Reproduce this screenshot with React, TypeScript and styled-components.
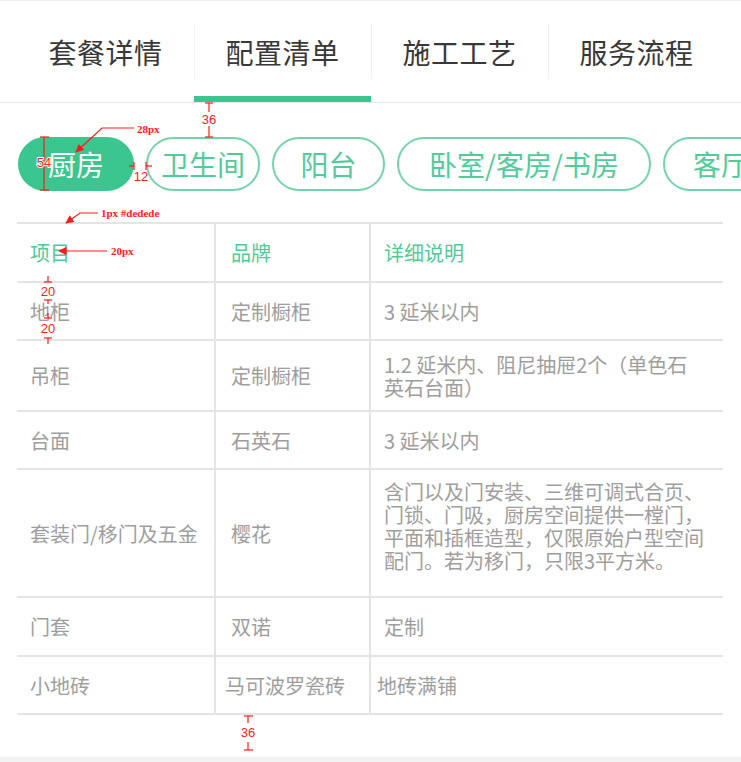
import React from 'react'
import styled, { createGlobalStyle } from 'styled-components'

const green = '#3cc68f'
const rule = '#e4e4e4'
const grey = '#9e9e9e'
const red = '#ff1a1a'

const GlobalStyle = createGlobalStyle`
    html, body {
        margin: 0;
        padding: 0;
        background: #fff;
    }
    body {
        font-family: 'Noto Sans CJK SC', 'Noto Sans', sans-serif;
    }
`

const tabs = ['套餐详情', '配置清单', '施工工艺', '服务流程']

const rooms = [
    { label: '厨房', width: 116 },
    { label: '卫生间', width: 114 },
    { label: '阳台', width: 113 },
    { label: '卧室/客房/书房', width: 254 },
    { label: '客厅', width: 116 },
]

type Item = {
    name: string
    brand: string
    detail: string
    height: number
    lift?: boolean
}

const items: Item[] = [
    { name: '地柜', brand: '定制橱柜', detail: '3 延米以内', height: 58 },
    { name: '吊柜', brand: '定制橱柜', detail: '1.2 延米内、阻尼抽屉2个（单色石英石台面）', height: 71 },
    { name: '台面', brand: '石英石', detail: '3 延米以内', height: 58 },
    {
        name: '套装门/移门及五金',
        brand: '樱花',
        detail: '含门以及门安装、三维可调式合页、门锁、门吸，厨房空间提供一樘门，平面和插框造型，仅限原始户型空间配门。若为移门，只限3平方米。',
        height: 128,
        lift: true,
    },
    { name: '门套', brand: '双诺', detail: '定制', height: 59 },
    { name: '小地砖', brand: '马可波罗瓷砖', detail: '地砖满铺', height: 58 },
]

const Annotations = () => (
    <Overlay width={741} height={762} viewBox="0 0 741 762">
        <defs>
            <marker id="tip" viewBox="0 0 10 10" refX="9" refY="5" markerWidth="7" markerHeight="7" orient="auto">
                <path d="M0,0 L10,5 L0,10 z" fill={red} />
            </marker>
        </defs>
        <g stroke={red} strokeWidth={1.2} fill="none">
            {/* tabs to pills: 36 */}
            <line x1={209} y1={103} x2={209} y2={112} />
            <line x1={209} y1={126} x2={209} y2={137} />
            <line x1={205} y1={103} x2={213} y2={103} />
            <line x1={205} y1={137} x2={213} y2={137} />
            {/* 28px */}
            <polyline points="134,128 102,128 76,152" markerEnd="url(#tip)" />
            {/* pill height 54 */}
            <line x1={44} y1={137} x2={44} y2={190} />
            <line x1={40} y1={137} x2={49} y2={137} />
            <line x1={40} y1={190} x2={49} y2={190} />
            {/* pill gap 12 */}
            <line x1={129} y1={166} x2={134} y2={166} />
            <line x1={134} y1={162} x2={134} y2={170} />
            <line x1={146} y1={166} x2={152} y2={166} />
            <line x1={146} y1={162} x2={146} y2={170} />
            {/* 1px #dedede */}
            <polyline points="98,213 80,213 66,223" markerEnd="url(#tip)" />
            {/* 20px */}
            <line x1={107} y1={251} x2={59} y2={251} markerEnd="url(#tip)" />
            {/* row padding 20 / 20 */}
            <line x1={48} y1={276} x2={48} y2={282} />
            <line x1={44} y1={282} x2={52} y2={282} />
            <line x1={44} y1={300} x2={52} y2={300} />
            <line x1={48} y1={300} x2={48} y2={304} />
            <line x1={48} y1={313} x2={48} y2={318} />
            <line x1={44} y1={318} x2={52} y2={318} />
            <line x1={44} y1={338} x2={52} y2={338} />
            <line x1={48} y1={338} x2={48} y2={344} />
            {/* bottom 36 */}
            <line x1={244} y1={716} x2={253} y2={716} />
            <line x1={248} y1={716} x2={248} y2={723} />
            <line x1={248} y1={742} x2={248} y2={750} />
            <line x1={244} y1={750} x2={253} y2={750} />
        </g>
        <Measure x={209} y={124}>36</Measure>
        <Measure x={44} y={167} stroke="#fff" strokeWidth={2} paintOrder="stroke">54</Measure>
        <Measure x={141} y={181}>12</Measure>
        <Measure x={48} y={296}>20</Measure>
        <Measure x={48} y={333}>20</Measure>
        <Measure x={248} y={737}>36</Measure>
        <Note x={137} y={133}>28px</Note>
        <Note x={101} y={217}>1px #dedede</Note>
        <Note x={111} y={255}>20px</Note>
    </Overlay>
)

export default function App() {
    return (
        <Page>
            <GlobalStyle />
            <TabBar>
                {tabs.map((t, i) => (
                    <Tab key={t} active={i === 1} divided={i > 0}>
                        {t}
                    </Tab>
                ))}
            </TabBar>

            <PillRow>
                {rooms.map((r, i) => (
                    <Pill key={r.label} active={i === 0} w={r.width}>
                        {r.label}
                    </Pill>
                ))}
            </PillRow>

            <Table>
                <Row h={59}>
                    <Cell col={0} head>项目</Cell>
                    <Cell col={1} head>品牌</Cell>
                    <Cell col={2} head>详细说明</Cell>
                </Row>
                {items.map((it, i) => {
                    const tight = i === items.length - 1
                    return (
                        <Row key={it.name} h={it.height}>
                            <Cell col={0}>{it.name}</Cell>
                            <Cell col={1} tight={tight}>{it.brand}</Cell>
                            <Cell col={2} tight={tight} lift={it.lift}>{it.detail}</Cell>
                        </Row>
                    )
                })}
            </Table>

            <Footer />
            <Annotations />
        </Page>
    )
}

const Page = styled.div`
    position: relative;
    width: 741px;
    overflow: hidden;
    background: #fff;
`

const TabBar = styled.nav`
    display: flex;
    padding: 0 17px;
    border-top: 1px solid #f0f0f0;
    border-bottom: 1px solid #e8e8e8;
`

const Tab = styled.div<{ active: boolean; divided: boolean }>`
    position: relative;
    flex: 0 0 177px;
    height: 101px;
    display: flex;
    align-items: center;
    justify-content: center;
    font-size: 28px;
    color: #383838;
    letter-spacing: 0.5px;

    &::before {
        content: '';
        display: ${p => (p.divided ? 'block' : 'none')};
        position: absolute;
        left: 0;
        top: 23px;
        height: 55px;
        width: 1px;
        background: #f1f1f1;
    }

    &::after {
        content: '';
        display: ${p => (p.active ? 'block' : 'none')};
        position: absolute;
        left: 0;
        right: 0;
        bottom: 0;
        height: 6px;
        background: ${green};
    }
`

const PillRow = styled.div`
    display: flex;
    gap: 12px;
    padding: 34px 0 0 18px;
    white-space: nowrap;
`

const Pill = styled.div<{ active: boolean; w: number }>`
    flex: none;
    box-sizing: border-box;
    width: ${p => p.w}px;
    height: 54px;
    border-radius: 27px;
    border: 2px solid ${p => (p.active ? green : '#72d4ab')};
    background: ${p => (p.active ? green : '#fff')};
    color: ${p => (p.active ? '#fff' : '#52cb9a')};
    font-size: 28px;
    display: flex;
    align-items: center;
    justify-content: center;
`

const Table = styled.div`
    margin: 31px 18px 0 17px;
    border-bottom: 2px solid ${rule};
`

const Row = styled.div<{ h: number }>`
    display: grid;
    grid-template-columns: 197px 155px 1fr;
    box-sizing: border-box;
    min-height: ${p => p.h}px;
    border-top: 2px solid ${rule};
`

const pads = [
    ['0 8px 0 13px', '0 8px 0 13px'],
    ['0 8px 0 15px', '0 6px 0 9px'],
    ['0 18px 0 13px', '0 18px 0 6px'],
]

const Cell = styled.div<{ col: number; head?: boolean; tight?: boolean; lift?: boolean }>`
    display: flex;
    align-items: center;
    box-sizing: border-box;
    padding: ${p => pads[p.col][p.tight ? 1 : 0]};
    padding-bottom: ${p => (p.lift ? '14px' : '0')};
    border-left: ${p => (p.col > 0 ? `2px solid ${rule}` : 'none')};
    font-size: 20px;
    line-height: 23px;
    color: ${p => (p.head ? '#4fca98' : grey)};
`

const Footer = styled.div`
    margin-top: 42px;
    height: 20px;
    background: #f3f3f3;
`

const Overlay = styled.svg`
    position: absolute;
    top: 0;
    left: 0;
    pointer-events: none;
`

const Measure = styled.text`
    font-family: 'Liberation Sans', Arial, sans-serif;
    font-size: 13px;
    fill: ${red};
    text-anchor: middle;
`

const Note = styled.text`
    font-family: 'Liberation Serif', serif;
    font-size: 11px;
    font-weight: bold;
    fill: ${red};
`
